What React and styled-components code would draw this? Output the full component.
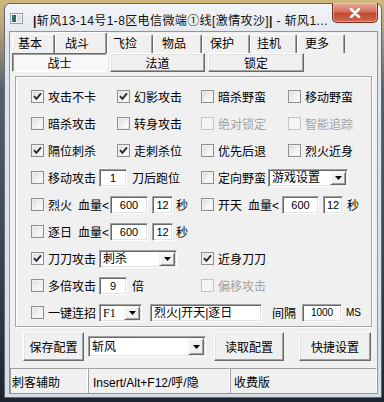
import React from "react";
import styled, { createGlobalStyle } from "styled-components";

const GlobalStyle = createGlobalStyle`
  html, body { margin: 0; padding: 0; }
  body {
    width: 384px;
    height: 402px;
    overflow: hidden;
    background: linear-gradient(180deg, #cfb77c 0px, #bba779 24px, #55606e 90px, #3a4352 260px, #1d2430 402px);
    font-family: "Liberation Sans", "Noto Sans CJK SC", sans-serif;
    font-size: 12px;
    color: #000;
  }
`;

const Window = styled.div`
  box-sizing: border-box;
  width: 378px;
  height: 395px;
  margin: 3px 0 0 4px;
  padding: 0 3px 3px 4px;
  display: flex;
  flex-direction: column;
  border: 1px solid #606b79;
  border-radius: 6px 6px 0 0;
  background: linear-gradient(180deg, #f1f4f7 0%, #e1e6ec 10%, #d8dee6 100%);
`;

const TitleBar = styled.div`
  height: 27px;
  display: flex;
  align-items: center;
`;

const AppIcon = styled.svg`
  flex: none;
  margin: 2px 10px 0 1px;
`;

const Title = styled.div`
  flex: 1;
  padding-top: 3px;
  white-space: nowrap;
  overflow: hidden;
  letter-spacing: 0.4px;
  color: #111;
`;

const Bar = styled.b`
  font-weight: bold;
`;

const CloseBtn = styled.div`
  box-sizing: border-box;
  flex: none;
  align-self: flex-start;
  width: 46px;
  height: 20px;
  margin-top: -1px;
  border: 1px solid #7a2a20;
  border-top: none;
  border-radius: 0 0 5px 5px;
  background: linear-gradient(180deg, #e8a898 0%, #d4715d 45%, #c24a32 55%, #cf6a4f 100%);
  box-shadow: inset 0 0 0 1px rgba(255, 220, 210, 0.45);
  display: flex;
  align-items: center;
  justify-content: center;
`;

const Client = styled.div`
  flex: 1;
  display: flex;
  flex-direction: column;
  background: #f0f0f0;
  border: 1px solid #8b96a3;
`;

const TabStrip = styled.div`
  height: 21px;
  display: flex;
  align-items: flex-end;
  padding-left: 2px;
`;

const Tab = styled.div`
  box-sizing: border-box;
  width: ${(p) => p.$w}px;
  height: ${(p) => (p.$active ? 21 : 19)}px;
  padding: ${(p) => (p.$active ? 3 : 1)}px 0 0 ${(p) => p.$pl}px;
  border-top: 1px solid #fff;
  border-left: 1px solid #fff;
  border-right: 1px solid #6b6b6b;
  border-radius: 2px 2px 0 0;
  box-shadow: inset -1px 0 0 #a0a0a0;
  line-height: 16px;
  font-size: 12px;
`;

const SubTabs = styled.div`
  display: flex;
  gap: 3px;
  padding-left: 2px;
  height: 19px;
`;

const SubTab = styled.div`
  box-sizing: border-box;
  width: ${(p) => p.$w}px;
  height: 19px;
  display: flex;
  align-items: center;
  justify-content: center;
  border: 1px solid;
  border-color: ${(p) => (p.$pressed ? "#6b6b6b #fff #fff #6b6b6b" : "#fff #6b6b6b #6b6b6b #fff")};
  box-shadow: ${(p) =>
    p.$pressed ? "inset 1px 1px 0 #a0a0a0" : "inset -1px -1px 0 #a0a0a0, inset 1px 1px 0 #e3e3e3"};
  background: ${(p) => (p.$pressed ? "#f8f8f8" : "#f0f0f0")};
`;

const Group = styled.div`
  box-sizing: border-box;
  height: 251px;
  margin: 4px 5px 0 5px;
  padding: 6px 0 0 15px;
  border: 1px solid #a6a6a6;
  box-shadow: inset 1px 1px 0 #fff, 1px 1px 0 #fff;
`;

const Row = styled.div`
  height: 27px;
  display: grid;
  grid-template-columns: 86px 84px 87px 1fr;
  align-items: center;
`;

const Cell = styled.div`
  grid-column: span ${(p) => p.$span || 1};
  display: flex;
  align-items: center;
  white-space: nowrap;
`;

const CheckLabel = styled.span`
  display: flex;
  align-items: center;
  color: ${(p) => (p.$disabled ? "#a3a3a3" : "#000")};
`;

const Box = styled.span`
  box-sizing: border-box;
  flex: none;
  width: 13px;
  height: 13px;
  margin-right: 4px;
  border: 1px solid ${(p) => (p.$disabled ? "#c4c4c4" : "#8e8f8f")};
  background: ${(p) => (p.$disabled ? "#f4f4f4" : "linear-gradient(135deg, #d8d8d8 0%, #f4f4f4 60%, #fff 100%)")};
  box-shadow: inset 0 0 0 1px ${(p) => (p.$disabled ? "#f4f4f4" : "#f0f0f0")};
  display: flex;
  align-items: center;
  justify-content: center;
`;

const Text = styled.span`
  margin-left: ${(p) => p.$ml || 0}px;
  font-size: ${(p) => p.$fs || 12}px;
  color: #000;
`;

const Field = styled.div`
  box-sizing: border-box;
  flex: none;
  width: ${(p) => p.$w}px;
  height: 18px;
  margin-left: ${(p) => p.$ml || 0}px;
  padding: 0 3px;
  background: #fff;
  border: 1px solid;
  border-color: #a0a0a0 #fff #fff #a0a0a0;
  box-shadow: inset 1px 1px 0 #696969, inset -1px -1px 0 #e3e3e3;
  display: flex;
  align-items: center;
  justify-content: ${(p) => (p.$left ? "flex-start" : "center")};
  font-size: ${(p) => p.$fs || 11}px;
  line-height: 14px;
  white-space: nowrap;
  overflow: hidden;
`;

const Select = styled.div`
  box-sizing: border-box;
  flex: none;
  width: ${(p) => p.$w}px;
  height: ${(p) => p.$h || 18}px;
  margin-left: ${(p) => p.$ml || 0}px;
  padding: 1px 1px 1px 3px;
  background: #fff;
  border: 1px solid;
  border-color: #a0a0a0 #fff #fff #a0a0a0;
  box-shadow: inset 1px 1px 0 #696969, inset -1px -1px 0 #e3e3e3;
  display: flex;
  align-items: stretch;
  font-family: ${(p) => (p.$serif ? '"Liberation Serif", serif' : "inherit")};
`;

const SelectText = styled.span`
  flex: 1;
  display: flex;
  align-items: center;
  line-height: 14px;
  white-space: nowrap;
`;

const ArrowBtn = styled.span`
  box-sizing: border-box;
  width: 16px;
  flex: none;
  background: #f0f0f0;
  border: 1px solid;
  border-color: #f0f0f0 #6b6b6b #6b6b6b #f0f0f0;
  box-shadow: inset 1px 1px 0 #fff, inset -1px -1px 0 #a0a0a0;
  display: flex;
  align-items: center;
  justify-content: center;
`;

const Footer = styled.div`
  height: 29px;
  margin-top: 5px;
  padding-left: 13px;
  display: flex;
  align-items: center;
`;

const Button = styled.div`
  box-sizing: border-box;
  width: ${(p) => p.$w}px;
  height: 29px;
  margin-left: ${(p) => p.$ml || 0}px;
  display: flex;
  align-items: center;
  justify-content: center;
  background: #f0f0f0;
  border: 1px solid;
  border-color: #fff #6b6b6b #6b6b6b #fff;
  box-shadow: inset -1px -1px 0 #a0a0a0, inset 1px 1px 0 #e3e3e3;
  font-size: 12px;
`;

const StatusBar = styled.div`
  height: 25px;
  margin-top: 7px;
  display: flex;
`;

const StatusPane = styled.div`
  box-sizing: border-box;
  width: ${(p) => (p.$w ? `${p.$w}px` : "auto")};
  flex: ${(p) => (p.$w ? "none" : 1)};
  padding-left: ${(p) => p.$pl}px;
  display: flex;
  align-items: center;
  border-top: 1px solid #a0a0a0;
  border-left: 1px solid #a0a0a0;
  border-right: 1px solid #fff;
  white-space: nowrap;
  overflow: hidden;
`;

const Tick = () => (
  <svg width="9" height="9" viewBox="0 0 9 9">
    <path d="M1 4.2 L3.4 6.8 L8 1.4" fill="none" stroke="#1f2a36" strokeWidth="1.9" />
  </svg>
);

const Check = ({ checked, disabled, label }) => (
  <CheckLabel $disabled={disabled}>
    <Box $disabled={disabled}>{checked && <Tick />}</Box>
    {label}
  </CheckLabel>
);

const Arrow = () => (
  <ArrowBtn>
    <svg width="7" height="4" viewBox="0 0 7 4">
      <polygon points="0,0 7,0 3.5,4" fill="#000" />
    </svg>
  </ArrowBtn>
);

const Drop = ({ w, h, ml, serif, children }) => (
  <Select $w={w} $h={h} $ml={ml} $serif={serif}>
    <SelectText>{children}</SelectText>
    <Arrow />
  </Select>
);

const tabs = [
  { label: "基本", w: 43, pl: 5 },
  { label: "战斗", w: 52, pl: 9, active: true },
  { label: "飞捡", w: 46, pl: 5 },
  { label: "物品", w: 49, pl: 8 },
  { label: "保护", w: 48, pl: 7 },
  { label: "挂机", w: 47, pl: 6 },
  { label: "更多", w: 48, pl: 7 },
];

export default function App() {
  return (
    <>
      <GlobalStyle />
      <Window>
        <TitleBar>
          <AppIcon width="13" height="11" viewBox="0 0 13 11">
            <rect x="0.5" y="0.5" width="12" height="10" fill="#f4f4f4" stroke="#9aa3ad" />
            <rect x="2" y="2" width="4" height="7" fill="#2f6e5e" />
            <rect x="7" y="2" width="4" height="7" fill="#dadfe4" />
          </AppIcon>
          <Title>
            <Bar>|</Bar>斩风13-14号1-8区电信微端①线[激情攻沙]<Bar>|</Bar> - 斩风1...
          </Title>
          <CloseBtn>
            <svg width="12" height="10" viewBox="0 0 12 10">
              <path d="M2 1 L10 9 M10 1 L2 9" stroke="#fff" strokeWidth="2.6" strokeLinecap="round" />
            </svg>
          </CloseBtn>
        </TitleBar>

        <Client>
          <TabStrip>
            {tabs.map((t) => (
              <Tab key={t.label} $w={t.w} $pl={t.pl} $active={t.active}>
                {t.label}
              </Tab>
            ))}
          </TabStrip>

          <SubTabs>
            <SubTab $w={95} $pressed>战士</SubTab>
            <SubTab $w={95}>法道</SubTab>
            <SubTab $w={96}>锁定</SubTab>
          </SubTabs>

          <Group>
            <Row>
              <Cell><Check checked label="攻击不卡" /></Cell>
              <Cell><Check checked label="幻影攻击" /></Cell>
              <Cell><Check label="暗杀野蛮" /></Cell>
              <Cell><Check label="移动野蛮" /></Cell>
            </Row>
            <Row>
              <Cell><Check label="暗杀攻击" /></Cell>
              <Cell><Check label="转身攻击" /></Cell>
              <Cell><Check disabled label="绝对锁定" /></Cell>
              <Cell><Check disabled label="智能追踪" /></Cell>
            </Row>
            <Row>
              <Cell><Check checked label="隔位刺杀" /></Cell>
              <Cell><Check checked label="走刺杀位" /></Cell>
              <Cell><Check label="优先后退" /></Cell>
              <Cell><Check label="烈火近身" /></Cell>
            </Row>
            <Row>
              <Cell $span={2}>
                <Check label="移动攻击" />
                <Field $w={28} $ml={3}>1</Field>
                <Text $ml={5}>刀后跑位</Text>
              </Cell>
              <Cell $span={2}>
                <Check label="定向野蛮" />
                <Drop w={80} ml={2}>游戏设置</Drop>
              </Cell>
            </Row>
            <Row>
              <Cell $span={2}>
                <Check label="烈火" />
                <Text $ml={6}>血量&lt;</Text>
                <Field $w={38} $ml={1}>600</Field>
                <Field $w={21} $ml={4}>12</Field>
                <Text $ml={3}>秒</Text>
              </Cell>
              <Cell $span={2}>
                <Check label="开天" />
                <Text $ml={6}>血量&lt;</Text>
                <Field $w={37} $ml={3}>600</Field>
                <Field $w={20} $ml={4}>12</Field>
                <Text $ml={4}>秒</Text>
              </Cell>
            </Row>
            <Row>
              <Cell $span={2}>
                <Check label="逐日" />
                <Text $ml={6}>血量&lt;</Text>
                <Field $w={38} $ml={1}>600</Field>
                <Field $w={21} $ml={4}>12</Field>
                <Text $ml={3}>秒</Text>
              </Cell>
            </Row>
            <Row>
              <Cell $span={2}>
                <Check checked label="刀刀攻击" />
                <Drop w={78} ml={3}>刺杀</Drop>
              </Cell>
              <Cell $span={2}><Check checked label="近身刀刀" /></Cell>
            </Row>
            <Row>
              <Cell $span={2}>
                <Check label="多倍攻击" />
                <Field $w={28} $ml={3}>9</Field>
                <Text $ml={5}>倍</Text>
              </Cell>
              <Cell $span={2}><Check disabled label="偏移攻击" /></Cell>
            </Row>
            <Row>
              <Cell $span={4}>
                <Check label="一键连招" />
                <Drop w={43} ml={3} serif>F1</Drop>
                <Field $w={112} $ml={8} $left $fs={12}>烈火|开天|逐日</Field>
                <Text $ml={10}>间隔</Text>
                <Field $w={40} $ml={6} $fs={10}>1000</Field>
                <Text $ml={4} $fs={10}>MS</Text>
              </Cell>
            </Row>
          </Group>

          <Footer>
            <Button $w={61}>保存配置</Button>
            <Drop w={118} h={21} ml={4}>斩风</Drop>
            <Button $w={70} $ml={8}>读取配置</Button>
            <Button $w={72} $ml={15}>快捷设置</Button>
          </Footer>

          <StatusBar>
            <StatusPane $w={78} $pl={1}>刺客辅助</StatusPane>
            <StatusPane $w={142} $pl={4}>Insert/Alt+F12/呼/隐</StatusPane>
            <StatusPane $pl={3}>收费版</StatusPane>
          </StatusBar>
        </Client>
      </Window>
    </>
  );
}
